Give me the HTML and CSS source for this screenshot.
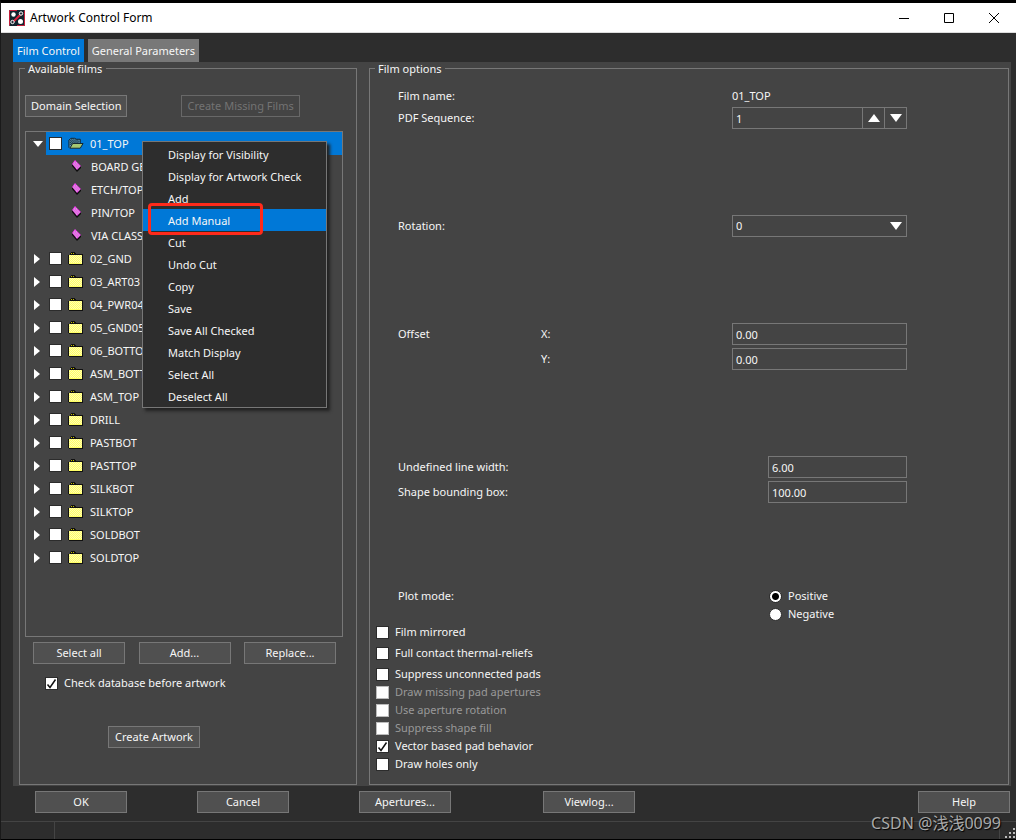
FILE: index.html
```html
<!DOCTYPE html>
<html lang="en">
<head>
<meta charset="utf-8">
<title>Artwork Control Form</title>
<link rel="stylesheet" href="styles.css">
</head>
<body>
<svg class="defs" width="0" height="0" aria-hidden="true">
  <defs>
    <symbol id="folder" viewBox="0 0 16 13"><path d="M0 3h2V1h1V0h4v1h1v1h7v11H1v-1H0z" fill="#111"/><path d="M3 1h1v1H3zM5 1h1v1H5z" fill="#c8c000"/><path d="M1 3h13v9H1z" fill="#ffff66"/><path d="M1 4.500h13M1 6.500h13M1 8.500h13M1 10.500h13" stroke="#fffcb4" stroke-dasharray="1 1"/><path d="M2 3.500h12M2 5.500h12M2 7.500h12M2 9.500h12" stroke="#fffcb4" stroke-dasharray="1 1"/></symbol>
    <symbol id="open" viewBox="0 0 17 13"><path d="M1 11V3l2-2h4l2 1h4v4" fill="#5f9ab5" stroke="#0b1c28"/><path d="M2 3.500h10M2 5.500h10M2 7.500h3" stroke="#10202c" stroke-dasharray="1 1"/><path d="M3 2.500h8M3 4.500h10M3 6.500h3" stroke="#10202c" stroke-dasharray="1 1"/><path d="M5 6.500h11l-3 5H2z" fill="#a5c872" stroke="#12202a"/></symbol>
    <symbol id="gem" viewBox="0 0 12 13"><path d="M1 4l4-3 5 5v2l-4 4-5-6z" fill="#0c0c0c"/><path d="M4 0l6 6-4 4-5-6z" fill="#f246f2"/><path d="M3 2.500h3M2 4.500h6M4 6.500h5M5 8.500h2" stroke="#d59ad5" stroke-dasharray="1 1"/><path d="M3 3.500h4M3 5.500h6M5 7.500h3" stroke="#d59ad5" stroke-dasharray="1 1"/></symbol>
  </defs>
</svg>
<div class="window">
  <header class="titlebar">
    <svg class="logo" viewBox="0 0 16 16"><rect width="16" height="16" rx="1" fill="#12242e"/><path d="M.5 15.500V.5H8M15.500.5v15H8" fill="none" stroke="#c41e3a"/><path d="M4 12L12 4" stroke="#e01f3d" stroke-width="2"/><circle cx="4.500" cy="4.500" r="2.200" fill="#fff"/><circle cx="11.500" cy="11.500" r="2.500" fill="#fff"/><circle cx="12" cy="3.500" r="1.700" fill="#202a36" stroke="#fff"/><circle cx="3.500" cy="12" r="1.700" fill="#202a36" stroke="#fff"/></svg>
    <h1>Artwork Control Form</h1>
    <button class="win" aria-label="Minimize"><svg viewBox="0 0 10 10"><path d="M0 5.500h10"/></svg></button>
    <button class="win" aria-label="Maximize"><svg viewBox="0 0 10 10"><path d="M.5.5h9v9h-9z"/></svg></button>
    <button class="win" aria-label="Close"><svg viewBox="0 0 10 10"><path d="M0 0l10 10M10 0L0 10"/></svg></button>
  </header>
  <nav class="tabs"><button class="tab active">Film Control</button><button class="tab">General Parameters</button></nav>
  <main class="page">
    <fieldset class="group films">
      <legend>Available films</legend>
      <div class="top-actions"><button class="btn">Domain Selection</button><button class="btn" disabled>Create Missing Films</button></div>
      <div class="tree-wrap">
        <ul class="tree">
          <li class="row selected"><i class="arrow down"></i><input type="checkbox" id="f1"><svg class="ico open"><use href="#open"/></svg><label for="f1">01_TOP</label></li>
          <li class="row child"><svg class="gem"><use href="#gem"/></svg><span>BOARD GEOMETRY</span></li>
          <li class="row child"><svg class="gem"><use href="#gem"/></svg><span>ETCH/TOP</span></li>
          <li class="row child"><svg class="gem"><use href="#gem"/></svg><span>PIN/TOP</span></li>
          <li class="row child"><svg class="gem"><use href="#gem"/></svg><span>VIA CLASS/TOP</span></li>
          <li class="row"><i class="arrow"></i><input type="checkbox" id="f2"><svg class="ico"><use href="#folder"/></svg><label for="f2">02_GND</label></li>
          <li class="row"><i class="arrow"></i><input type="checkbox" id="f3"><svg class="ico"><use href="#folder"/></svg><label for="f3">03_ART03</label></li>
          <li class="row"><i class="arrow"></i><input type="checkbox" id="f4"><svg class="ico"><use href="#folder"/></svg><label for="f4">04_PWR04</label></li>
          <li class="row"><i class="arrow"></i><input type="checkbox" id="f5"><svg class="ico"><use href="#folder"/></svg><label for="f5">05_GND05</label></li>
          <li class="row"><i class="arrow"></i><input type="checkbox" id="f6"><svg class="ico"><use href="#folder"/></svg><label for="f6">06_BOTTOM</label></li>
          <li class="row"><i class="arrow"></i><input type="checkbox" id="f7"><svg class="ico"><use href="#folder"/></svg><label for="f7">ASM_BOTTOM</label></li>
          <li class="row"><i class="arrow"></i><input type="checkbox" id="f8"><svg class="ico"><use href="#folder"/></svg><label for="f8">ASM_TOP</label></li>
          <li class="row"><i class="arrow"></i><input type="checkbox" id="f9"><svg class="ico"><use href="#folder"/></svg><label for="f9">DRILL</label></li>
          <li class="row"><i class="arrow"></i><input type="checkbox" id="f10"><svg class="ico"><use href="#folder"/></svg><label for="f10">PASTBOT</label></li>
          <li class="row"><i class="arrow"></i><input type="checkbox" id="f11"><svg class="ico"><use href="#folder"/></svg><label for="f11">PASTTOP</label></li>
          <li class="row"><i class="arrow"></i><input type="checkbox" id="f12"><svg class="ico"><use href="#folder"/></svg><label for="f12">SILKBOT</label></li>
          <li class="row"><i class="arrow"></i><input type="checkbox" id="f13"><svg class="ico"><use href="#folder"/></svg><label for="f13">SILKTOP</label></li>
          <li class="row"><i class="arrow"></i><input type="checkbox" id="f14"><svg class="ico"><use href="#folder"/></svg><label for="f14">SOLDBOT</label></li>
          <li class="row"><i class="arrow"></i><input type="checkbox" id="f15"><svg class="ico"><use href="#folder"/></svg><label for="f15">SOLDTOP</label></li>
        </ul>
        <div class="menu" role="menu">
          <button role="menuitem">Display for Visibility</button>
          <button role="menuitem">Display for Artwork Check</button>
          <button role="menuitem">Add</button>
          <button role="menuitem" class="hot">Add Manual</button>
          <button role="menuitem">Cut</button>
          <button role="menuitem">Undo Cut</button>
          <button role="menuitem">Copy</button>
          <button role="menuitem">Save</button>
          <button role="menuitem">Save All Checked</button>
          <button role="menuitem">Match Display</button>
          <button role="menuitem">Select All</button>
          <button role="menuitem">Deselect All</button>
          <div class="marker"></div>
        </div>
      </div>
      <div class="list-actions"><button class="btn wide">Select all</button><button class="btn wide">Add...</button><button class="btn wide">Replace...</button></div>
      <label class="check db"><input type="checkbox" checked>Check database before artwork</label>
      <button class="btn wide create">Create Artwork</button>
    </fieldset>
    <fieldset class="group options">
      <legend>Film options</legend>
      <div class="form">
        <div class="line"><span>Film name:</span><output>01_TOP</output></div>
        <div class="line"><label for="seq">PDF Sequence:</label><div class="spin"><input class="field" id="seq" value="1"><button aria-label="Increase"><i class="tri up"></i></button><button aria-label="Decrease"><i class="tri"></i></button></div></div>
        <div class="line section"><label for="rot">Rotation:</label><div class="combo"><select class="field" id="rot"><option>0</option></select><i class="tri"></i></div></div>
        <div class="line section"><span>Offset</span><label for="ox" class="axis">X:</label><input class="field" id="ox" value="0.00"></div>
        <div class="line next"><label for="oy" class="axis">Y:</label><input class="field" id="oy" value="0.00"></div>
        <div class="line section"><label for="lw">Undefined line width:</label><input class="field short" id="lw" value="6.00"></div>
        <div class="line next"><label for="bb">Shape bounding box:</label><input class="field short" id="bb" value="100.00"></div>
        <div class="line plot"><span>Plot mode:</span><div class="radios"><label class="check"><input type="radio" name="mode" checked>Positive</label><label class="check"><input type="radio" name="mode">Negative</label></div></div>
      </div>
      <div class="flags">
        <label class="check spaced"><input type="checkbox">Film mirrored</label>
        <label class="check spaced"><input type="checkbox">Full contact thermal-reliefs</label>
        <label class="check"><input type="checkbox">Suppress unconnected pads</label>
        <label class="check"><input type="checkbox" disabled>Draw missing pad apertures</label>
        <label class="check"><input type="checkbox" disabled>Use aperture rotation</label>
        <label class="check"><input type="checkbox" disabled>Suppress shape fill</label>
        <label class="check"><input type="checkbox" checked>Vector based pad behavior</label>
        <label class="check"><input type="checkbox">Draw holes only</label>
      </div>
    </fieldset>
  </main>
  <div class="bottom"><button class="btn wide">OK</button><button class="btn wide">Cancel</button><button class="btn wide">Apertures...</button><button class="btn wide">Viewlog...</button><button class="btn wide">Help</button></div>
  <footer class="status"><div class="cell"></div><div class="cell grow"></div><svg class="grip" viewBox="0 0 12 12"><path d="M9 1h2v2H9zM5 5h2v2H5zM9 5h2v2H9zM1 9h2v2H1zM5 9h2v2H5zM9 9h2v2H9z" fill="#bbb"/></svg></footer>
  <div class="watermark">CSDN @浅浅0099</div>
</div>
</body>
</html>
```
FILE: styles.css
```css
* { box-sizing: border-box; }
body {
  margin: 0;
  min-height: 100vh;
  background: #000;
  color: #f6f6f6;
  font: 400 11px/16px "Noto Sans", "Open Sans", sans-serif;
}
button, input, select { font: inherit; color: inherit; margin: 0; }
.defs { position: absolute; }
.window {
  position: relative;
  display: flex;
  flex-direction: column;
  min-height: 100vh;
  background: #2d2d2d;
  border-top: 3px solid #000;
  border-left: 1px solid #1a1a1a;
  border-bottom: 2px solid #000;
}
.titlebar {
  display: flex;
  align-items: center;
  height: 30px;
  padding-left: 8px;
  background: #fff;
  border-bottom: 1px solid #ddd;
}
.logo { width: 16px; height: 16px; }
.titlebar h1 { flex: 1; margin: 0 0 0 5px; color: #000; font-size: 12px; font-weight: 400; }
.win { width: 45px; height: 28px; padding: 0; border: 0; background: none; display: grid; place-items: center; }
.win svg { width: 10px; height: 10px; fill: none; stroke: #000; }
.tabs { display: flex; gap: 4px; padding: 6px 0 0 12px; }
.tab { height: 23px; padding: 0 4px; border: 0; background: #787878; white-space: nowrap; }
.tab.active { background: #0078d7; }
.page {
  flex: 1;
  display: grid;
  grid-template-columns: 338fr 640fr;
  gap: 12px;
  margin: 0 5px 0 12px;
  padding: 0 2px 1px 6px;
  background: #444;
}
.group { position: relative; min-width: 0; margin: 6px 0 0; padding: 0; border: 1px solid #777; border-top: 0; }
.group::before { content: ""; position: absolute; inset: 0 0 auto; border-top: 1px solid #777; }
.group legend { position: absolute; top: -6px; left: 5px; padding: 0 4px 0 3px; background: #444; line-height: 14px; }
.btn { height: 22px; padding: 0 5px; border: 1px solid #777; background: #505050; white-space: nowrap; }
.btn:disabled { background: #444; border-color: #686868; color: #737373; }
.btn.wide { width: 92px; }
.films { display: flex; flex-direction: column; }
.top-actions { display: flex; gap: 54px; padding: 27px 5px 14px; }
.tree-wrap { position: relative; flex: 1; margin: 0 13px 0 5px; border: 1px solid #777; }
.tree { list-style: none; margin: 0; padding: 0; }
.row { display: flex; align-items: center; height: 23px; padding-left: 8px; white-space: nowrap; }
.row.selected { background: linear-gradient(90deg, transparent 20px, #0078d7 20px); }
.row label, .row span { margin-left: 6px; }
.row.child { padding-left: 45px; }
.row.child span { margin-left: 8px; }
.arrow { width: 0; height: 0; margin-right: 9px; border-left: 6px solid #fff; border-top: 5px solid transparent; border-bottom: 5px solid transparent; }
.arrow.down { margin-left: -1px; margin-right: 6px; border-top: 6px solid #fff; border-left: 5px solid transparent; border-right: 5px solid transparent; border-bottom: 0; }
.ico { width: 16px; height: 13px; margin-left: 6px; }
.gem { width: 12px; height: 13px; }
input[type="checkbox"], input[type="radio"] {
  appearance: none;
  flex: none;
  width: 13px;
  height: 13px;
  border: 1px solid #2c2c2c;
  background: #fff;
}
input[type="checkbox"]:disabled { border-color: #bbb; }
input[type="checkbox"]:checked { background: #fff url("data:image/svg+xml,%3Csvg xmlns='http://www.w3.org/2000/svg' viewBox='0 0 11 11'%3E%3Cpath d='M1.500 6.500L4 9.500 9.500 1.500' fill='none' stroke='%23111' stroke-width='1.500'/%3E%3C/svg%3E"); }
input[type="radio"] { border-radius: 50%; }
input[type="radio"]:checked { background: radial-gradient(circle, #000 3px, #fff 4px); }
.menu {
  position: absolute;
  z-index: 2;
  top: 9px;
  left: 116px;
  width: 185px;
  padding: 1px 0 0;
  border: 1px solid #777;
  background: #2d2d2d;
  box-shadow: 3px 3px 3px #222;
}
.menu button { display: block; width: 100%; height: 22px; padding: 2px 0 0 25px; border: 0; background: none; text-align: left; white-space: nowrap; }
.menu .hot { background: #0078d7; }
.marker { position: absolute; top: 61px; left: 5px; width: 115px; height: 32px; border: 3px solid #ff2a1a; border-radius: 4px; }
.list-actions { display: flex; justify-content: space-between; padding: 5px 20px 0 13px; }
.check { display: flex; align-items: center; gap: 6px; height: 18px; white-space: nowrap; }
.check:has(:disabled) { color: #999; }
.db { margin: 10px 0 0 25px; }
.create { margin: 34px 0 36px 88px; }
.form { padding: 17px 101px 0 28px; }
.line { display: flex; align-items: center; height: 22px; }
.line > :first-child { flex: 1; }
.line output, .spin, .combo, .field { width: 175px; }
.field { height: 22px; padding: 0 3px; border: 1px solid #777; border-radius: 0; background: #444; outline: 0; }
.field.short { width: 139px; }
.spin { display: flex; }
.spin .field { flex: 1; min-width: 0; }
.spin button { display: grid; place-items: center; width: 22px; height: 22px; padding: 0; border: 1px solid #777; border-left: 0; background: #444; }
.tri { width: 0; height: 0; border: 6px solid transparent; border-top: 8px solid #fff; border-bottom: 0; }
.tri.up { border-top: 0; border-bottom: 8px solid #fff; }
.combo { position: relative; }
.combo select { appearance: none; }
.combo .tri { position: absolute; right: 5px; top: 7px; pointer-events: none; }
.section { margin-top: 86px; }
.next { margin-top: 3px; }
.axis { width: 191px; }
.line > .axis:first-child { flex: none; margin-left: auto; }
.plot { height: 36px; margin-top: 84px; align-items: flex-start; line-height: 18px; }
.radios { width: 138px; }
.flags { padding: 0 0 11px 6px; }
.spaced { margin-bottom: 3px; }
.bottom { display: grid; grid-template-columns: 162fr 162fr 184fr 375fr 92px; padding: 5px 6px 8px 34px; }
.status { display: flex; align-items: stretch; height: 18px; border-top: 1px solid #444; }
.cell { width: 54px; border-right: 1px solid #444; }
.grow { flex: 1; }
.grip { width: 12px; height: 12px; align-self: flex-end; margin-left: 4px; }
.watermark { position: absolute; right: 15px; bottom: 4px; color: #aaa; font: 16px/24px "Noto Sans", "Noto Sans CJK SC", sans-serif; text-shadow: 1px 1px 1px #000; }
```
